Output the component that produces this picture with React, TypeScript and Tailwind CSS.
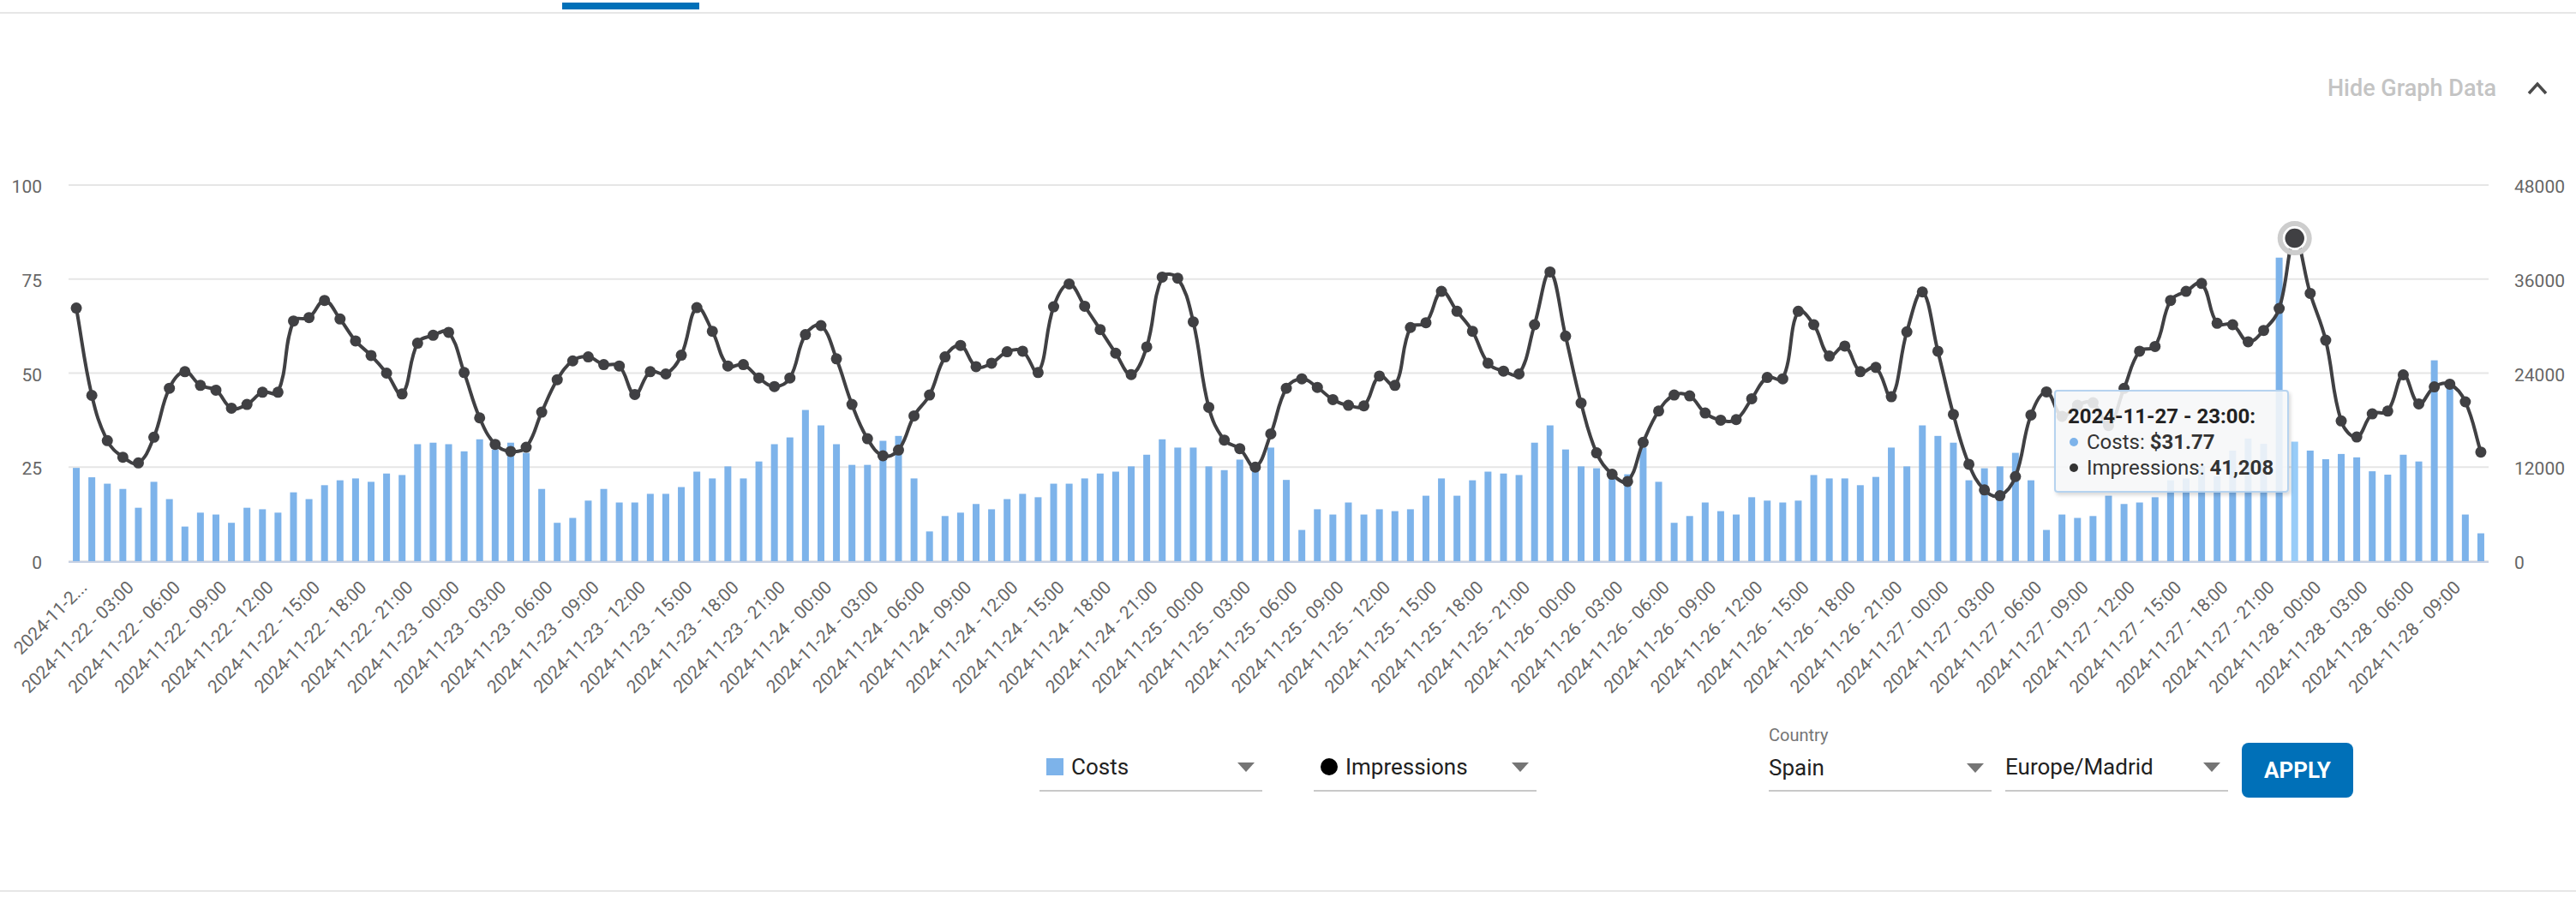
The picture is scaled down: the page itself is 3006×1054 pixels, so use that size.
import { FC, ReactNode } from 'react'

const costs = [
  24.8, 22.3, 20.6, 19.2, 14.2, 21.1, 16.5, 9.2, 12.9, 12.4,
  10.2, 14.2, 13.8, 12.9, 18.3, 16.5, 20.2, 21.5, 22.0, 21.1,
  23.3, 22.9, 31.1, 31.5, 31.1, 29.2, 32.4, 29.7, 31.5, 28.8,
  19.2, 10.2, 11.5, 16.1, 19.2, 15.6, 15.6, 17.9, 17.9, 19.7,
  23.8, 22.0, 25.2, 22.0, 26.5, 31.1, 32.9, 40.2, 36.1, 31.1,
  25.6, 25.6, 32.0, 33.3, 22.0, 7.9, 12.0, 12.9, 15.2, 13.8,
  16.5, 17.9, 17.0, 20.6, 20.6, 22.0, 23.3, 23.8, 25.2, 28.3,
  32.4, 30.2, 30.2, 25.2, 24.2, 27.0, 25.0, 30.2, 21.6, 8.3,
  13.8, 12.4, 15.6, 12.4, 13.8, 13.3, 13.8, 17.4, 22.0, 17.4,
  21.5, 23.8, 23.3, 22.9, 31.5, 36.1, 29.7, 25.2, 24.7, 23.3,
  23.1, 30.2, 21.1, 10.2, 12.0, 15.6, 13.3, 12.4, 17.0, 16.1,
  15.6, 16.1, 22.9, 22.0, 22.0, 20.2, 22.4, 30.2, 25.2, 36.1,
  33.3, 31.5, 21.5, 24.7, 25.2, 28.8, 21.5, 8.3, 12.4, 11.5,
  12.0, 17.4, 15.2, 15.6, 17.0, 21.5, 22.0, 25.3, 22.6, 29.4,
  32.6, 31.2, 80.7, 31.77, 29.4, 27.1, 28.5, 27.6, 23.9, 23.0,
  28.3, 26.5, 53.4, 47.1, 12.4, 7.4,
]

const impressions = [
  32300, 21160, 15380, 13270, 12540, 15820, 22070, 24180, 22430, 21820,
  19530, 20000, 21560, 21560, 30650, 31090, 33270, 30910, 28110, 26250,
  24000, 21340, 27820, 28830, 29200, 24070, 18290, 14910, 14000, 14540,
  19020, 23160, 25560, 26070, 25090, 24910, 21270, 24180, 23890, 26290,
  32360, 29340, 24910, 25090, 23380, 22290, 23380, 28910, 30070, 25820,
  20000, 15630, 13450, 14180, 18540, 21200, 26070, 27530, 24830, 25270,
  26730, 26800, 24070, 32470, 35380, 32540, 29560, 26540, 23820, 27340,
  36250, 36110, 30540, 19640, 15450, 14360, 12000, 16250, 22070, 23270,
  22180, 20620, 19890, 19820, 23630, 22430, 29820, 30430, 34430, 31890,
  29340, 25270, 24250, 23890, 30180, 36910, 28720, 20180, 13820, 11090,
  10180, 15160, 19160, 21200, 21090, 18910, 18000, 18070, 20730, 23450,
  23270, 31890, 30180, 26180, 27450, 24180, 24730, 20980, 29270, 34360,
  26800, 18730, 12360, 9090, 8360, 10800, 18650, 21600, 18490, 19890,
  20220, 17300, 22050, 26800, 27400, 33270, 34430, 35450, 30360, 30180,
  28000, 29450, 32250, 41208, 34180, 28200, 17900, 15850, 18800, 19150,
  23780, 20070, 22240, 22590, 20340, 13920,
]

const HOVER = 143
const LEFT = 80
const RIGHT = 2904
const BASE = 652
const SPAN = 439
const band = (RIGHT - LEFT) / costs.length
const cx = (i: number) => LEFT + (i + 0.5) * band
const yCost = (c: number) => BASE - (c / 100) * SPAN
const yImp = (v: number) => BASE - (v / 48000) * SPAN

const labelFor = (i: number) => {
  if (i === 0) return '2024-11-2...'
  const day = 22 + Math.floor(i / 24)
  const hour = String(i % 24).padStart(2, '0')
  return `2024-11-${day} - ${hour}:00`
}

// same spline as chart.js (tension based control points)
const linePath = (pts: { x: number; y: number }[], t: number) => {
  const cps = pts.map((cur, i) => {
    const prev = pts[i - 1] ?? cur
    const next = pts[i + 1] ?? cur
    const d01 = Math.hypot(cur.x - prev.x, cur.y - prev.y)
    const d12 = Math.hypot(next.x - cur.x, next.y - cur.y)
    const sum = d01 + d12 || 1
    const fa = (t * d01) / sum
    const fb = (t * d12) / sum
    return {
      px: cur.x - fa * (next.x - prev.x),
      py: cur.y - fa * (next.y - prev.y),
      nx: cur.x + fb * (next.x - prev.x),
      ny: cur.y + fb * (next.y - prev.y),
    }
  })
  let d = `M${pts[0].x},${pts[0].y}`
  for (let i = 1; i < pts.length; i++) {
    d += ` C${cps[i - 1].nx},${cps[i - 1].ny} ${cps[i].px},${cps[i].py} ${pts[i].x},${pts[i].y}`
  }
  return d
}

const Chart: FC = () => {
  const pts = impressions.map((v, i) => ({ x: cx(i), y: yImp(v) }))
  const grid = [0, 1, 2, 3, 4]
  const ticks = Array.from({ length: 52 }, (_, k) => k * 3)

  return (
    <svg width={3006} height={660} viewBox="0 180 3006 660" className="block" fontFamily="Roboto, sans-serif">
      {grid.map((k) => (
        <line key={k} x1={LEFT} x2={RIGHT} y1={BASE - k * 109.75} y2={BASE - k * 109.75} stroke="#e6e6e6" strokeWidth={2} />
      ))}
      {grid.map((k) => (
        <text key={`l${k}`} x={49} y={BASE - k * 109.75 + 2} textAnchor="end" dominantBaseline="central" fontSize={21} fill="#666">
          {k * 25}
        </text>
      ))}
      {grid.map((k) => (
        <text key={`r${k}`} x={2934} y={BASE - k * 109.75 + 2} dominantBaseline="central" fontSize={21} fill="#666">
          {k * 12000}
        </text>
      ))}
      {costs.map((c, i) => (
        <rect key={i} x={cx(i) - 4} y={yCost(c)} width={8} height={BASE - yCost(c)} fill={i === HOVER ? '#98ccf8' : '#7db3ea'} />
      ))}
      <line x1={LEFT} x2={RIGHT} y1={BASE + 1} y2={BASE + 1} stroke="#c7d1e3" strokeWidth={2} />
      {ticks.map((i) => {
        const tx = cx(i) + 9
        const ty = 679
        return (
          <text key={i} x={tx} y={ty} transform={`rotate(-45 ${tx} ${ty})`} textAnchor="end" dominantBaseline="central" fontSize={21} fill="#666">
            {labelFor(i)}
          </text>
        )
      })}
      <path d={linePath(pts, 0.4)} fill="none" stroke="#404043" strokeWidth={4} />
      {pts.map((p, i) => (i === HOVER ? null : <circle key={i} cx={p.x} cy={p.y} r={6.5} fill="#404043" />))}
      <circle cx={pts[HOVER].x} cy={pts[HOVER].y} r={17} fill="none" stroke="#cdcdcd" strokeWidth={6} />
      <circle cx={pts[HOVER].x} cy={pts[HOVER].y} r={12.5} fill="#404043" stroke="#fff" strokeWidth={2.5} />
    </svg>
  )
}

const Caret: FC = () => (
  <svg width="20" height="11" viewBox="0 0 20 11" className="shrink-0">
    <path d="M0 0 L20 0 L10 11 Z" fill="#757575" />
  </svg>
)

interface SelectProps {
  icon?: ReactNode
  label: string
  className?: string
}

const Select: FC<SelectProps> = ({ icon, label, className }) => (
  <div className={`flex w-[260px] items-center border-b-2 border-[#c8c8c8] pr-[9px] ${className ?? ''}`}>
    {icon}
    <span className="flex-1 text-[26px] leading-none text-[#212121]">{label}</span>
    <Caret />
  </div>
)

const App: FC = () => {
  return (
    <div className="relative h-[1054px] w-[3006px] overflow-hidden bg-white font-['Roboto',sans-serif]">
      <div className="h-[13px] border-b-2 border-[#e6e6e6]">
        <div className="ml-[656px] mt-[3px] h-[8px] w-[160px] bg-[#0070b8]" />
      </div>

      <div className="mt-[63px] flex h-[48px] items-center justify-end gap-[36px] pr-[33px]">
        <span className="text-[27px] font-medium text-[#c4c4c4]">Hide Graph Data</span>
        <svg width="24" height="16" viewBox="0 0 24 16">
          <path d="M2 14 L12 3 L22 14" fill="none" stroke="#4a4a4a" strokeWidth={3.5} />
        </svg>
      </div>

      <div className="relative mt-[56px] h-[660px]">
        <Chart />
        <div className="absolute left-[2397px] top-[272px] whitespace-nowrap rounded-[4px] border-2 border-[#b6d3ef] bg-[rgba(246,247,248,0.88)] pb-[12px] pl-[14px] pr-[16px] pt-[14px] text-[24px] leading-[30px] text-[#333] shadow-[2px_3px_4px_rgba(0,0,0,0.15)]">
          <div className="font-bold text-[#222]">2024-11-27 - 23:00:</div>
          <div className="flex items-center">
            <span className="ml-[2px] mr-[10px] h-[10px] w-[10px] rounded-full bg-[#7db3ea]" />
            <span>
              Costs: <b>$31.77</b>
            </span>
          </div>
          <div className="flex items-center">
            <span className="ml-[2px] mr-[10px] h-[10px] w-[10px] rounded-full bg-[#333]" />
            <span>
              Impressions: <b>41,208</b>
            </span>
          </div>
        </div>
      </div>

      <div className="grid h-[88px] grid-cols-[1fr_auto_1fr] items-start">
        <div />
        <div className="mt-[25px] flex gap-[60px]">
          <Select
            className="h-[56px] pl-[8px]"
            label="Costs"
            icon={<span className="mr-[9px] h-[20px] w-[20px] shrink-0 bg-[#7db3ea]" />}
          />
          <Select
            className="h-[56px] pl-[8px]"
            label="Impressions"
            icon={<span className="mr-[9px] h-[20px] w-[20px] shrink-0 rounded-full bg-black" />}
          />
        </div>
        <div className="flex items-start gap-[16px] pl-[271px]">
          <div className="mt-[3px]">
            <div className="text-[20px] leading-[24px] text-[#757575]">Country</div>
            <Select className="h-[54px]" label="Spain" />
          </div>
          <Select className="mt-[25px] h-[56px]" label="Europe/Madrid" />
          <button className="mt-[24px] h-[64px] w-[130px] rounded-[8px] bg-[#0070b8] text-[26px] font-bold text-white">
            APPLY
          </button>
        </div>
      </div>

      <div className="mt-[108px] border-t-2 border-[#e6e6e6]" />
    </div>
  )
}

export default App
